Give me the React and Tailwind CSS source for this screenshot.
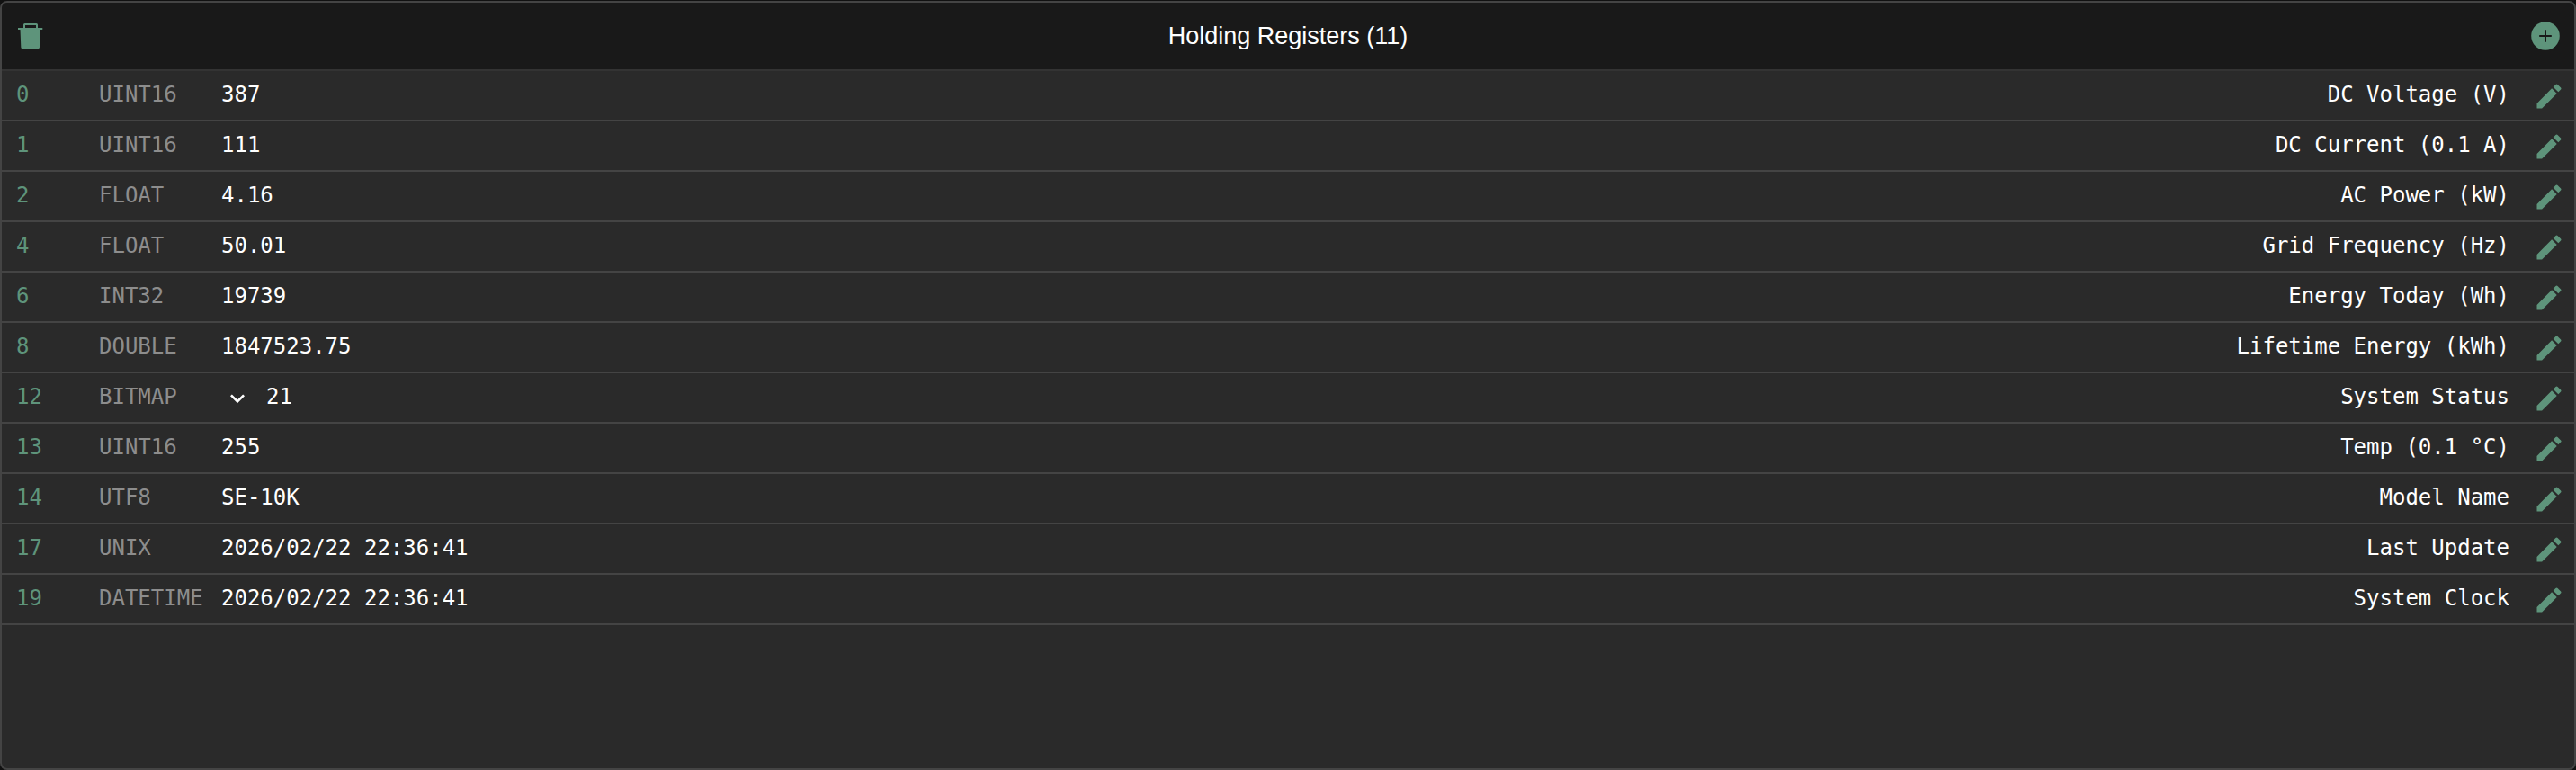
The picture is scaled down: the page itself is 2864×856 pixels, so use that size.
import React from "react";
import { MdEdit, MdKeyboardArrowDown } from "react-icons/md";

const registers = [
  { address: 0, type: "UINT16", value: "387", label: "DC Voltage (V)" },
  { address: 1, type: "UINT16", value: "111", label: "DC Current (0.1 A)" },
  { address: 2, type: "FLOAT", value: "4.16", label: "AC Power (kW)" },
  { address: 4, type: "FLOAT", value: "50.01", label: "Grid Frequency (Hz)" },
  { address: 6, type: "INT32", value: "19739", label: "Energy Today (Wh)" },
  { address: 8, type: "DOUBLE", value: "1847523.75", label: "Lifetime Energy (kWh)" },
  { address: 12, type: "BITMAP", value: "21", label: "System Status" },
  { address: 13, type: "UINT16", value: "255", label: "Temp (0.1 °C)" },
  { address: 14, type: "UTF8", value: "SE-10K", label: "Model Name" },
  { address: 17, type: "UNIX", value: "2026/02/22 22:36:41", label: "Last Update" },
  { address: 19, type: "DATETIME", value: "2026/02/22 22:36:41", label: "System Clock" },
];

function TrashIcon() {
  return (
    <svg viewBox="0 0 32 32" className="size-8" fill="currentColor" aria-hidden="true">
      <path d="M8 8V3.500A1.500 1.500 0 0 1 9.500 2H22.500A1.500 1.500 0 0 1 24 3.500V8H22V4H10V8Z" />
      <path d="M2 7H29.300V9H27L26 28.500A1.600 1.600 0 0 1 24.300 30H7A1.600 1.600 0 0 1 5.300 28.500L4.500 9H2Z" />
    </svg>
  );
}

function AddIcon() {
  return (
    <svg viewBox="0 0 32 32" className="size-8" aria-hidden="true">
      <circle cx="16" cy="16" r="15.8" fill="currentColor" />
      <path d="M16 9.200V22.800M9.200 16H22.800" stroke="#191919" strokeWidth="2" />
    </svg>
  );
}

function RegisterRow({ address, type, value, label }) {
  const cell = "h-14 border-b-2 border-[#444444] p-0 pb-0.5";

  return (
    <tr>
      <td className={`${cell} w-[108px] pl-4 text-[#5e947b]`}>{address}</td>
      <td className={`${cell} w-[136px] text-[#8d8d8d]`}>{type}</td>
      <td className={cell}>
        <div className="flex items-center">
          {type === "BITMAP" && (
            <button type="button" aria-label="Expand bits" className="mr-4 ml-0.5 pt-1">
              <MdKeyboardArrowDown className="size-8" />
            </button>
          )}
          {value}
        </div>
      </td>
      <td className={`${cell} text-right`}>{label}</td>
      <td className="h-14 w-[72px] border-b-2 border-[#444444] p-0 pt-0.5 pr-2.5">
        <button type="button" aria-label={`Edit ${label}`} className="ml-auto block text-[#5e947b]">
          <MdEdit className="size-9" />
        </button>
      </td>
    </tr>
  );
}

export default function App() {
  return (
    <div className="flex min-h-screen flex-col bg-[#111111] pt-px text-white">
      <section className="flex-1 overflow-hidden rounded-lg border-2 border-[#444444] bg-[#2a2a2a]">
        <header className="flex h-[76px] items-center justify-between border-b-2 border-[#333333] bg-[#191919] px-4">
          <button type="button" aria-label="Delete all registers" className="text-[#5e947b]">
            <TrashIcon />
          </button>
          <h1 className="font-['Liberation_Sans',Arial,sans-serif] text-[27px] leading-8">Holding Registers (11)</h1>
          <button type="button" aria-label="Add register" className="text-[#5e947b]">
            <AddIcon />
          </button>
        </header>
        <table className="w-full border-separate border-spacing-0 font-['DejaVu_Sans_Mono',monospace] text-2xl">
          <tbody>
            {registers.map((r) => (
              <RegisterRow key={r.address} {...r} />
            ))}
          </tbody>
        </table>
      </section>
    </div>
  );
}
